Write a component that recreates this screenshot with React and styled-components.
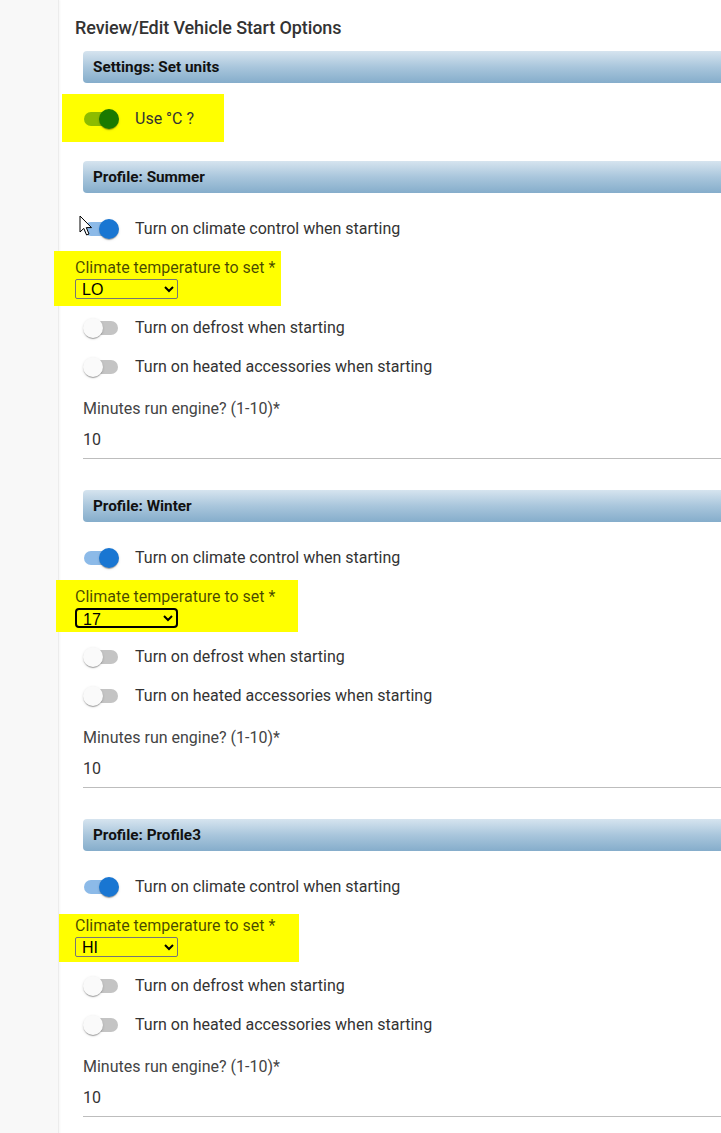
import React from "react"
import styled, { createGlobalStyle } from "styled-components"

const GlobalStyle = createGlobalStyle`
  html, body {
    margin: 0;
    padding: 0;
    background: #fff;
    overflow-x: hidden;
  }
  body {
    font-family: Roboto, "Noto Sans", Arial, sans-serif;
  }
`

const profiles = [
  {
    name: "Summer",
    temp: "LO",
    options: ["LO", "16", "17", "18", "HI"],
    mark: { l: 21, t: 7, b: 7, w: 227 },
    focused: false,
    cursor: true,
  },
  {
    name: "Winter",
    temp: "17",
    options: ["LO", "16", "17", "18", "HI"],
    mark: { l: 19, t: 7, b: 4, w: 242 },
    focused: true,
  },
  {
    name: "Profile3",
    temp: "HI",
    options: ["LO", "16", "17", "18", "HI"],
    mark: { l: 16, t: 2, b: 5, w: 240 },
    focused: false,
  },
]

const Switch = ({ on, color }) => (
  <SwitchRoot>
    <Track $on={on} $color={color} />
    <Thumb $on={on} $color={color} />
  </SwitchRoot>
)

const Cursor = () => (
  <CursorWrap>
    <svg width="14" height="22" viewBox="0 0 14 22">
      <path
        d="M1 1 L1 17 L4.8 13.4 L7.6 20 L10 19 L7.3 12.6 L12.5 12.6 Z"
        fill="#fff"
        stroke="#000"
        strokeWidth="1"
        strokeLinejoin="round"
      />
    </svg>
  </CursorWrap>
)

const App = () => (
  <>
    <GlobalStyle />
    <Page>
      <Sidebar />
      <Main>
        <Title>Review/Edit Vehicle Start Options</Title>

        <Section $after={23}>
          <Header>Settings: Set units</Header>
          <Mark $l={21} $t={5} $b={4} $w={162}>
            <ToggleRow>
              <Switch on color="26,122,0" />
              <ToggleLabel>Use °C ?</ToggleLabel>
            </ToggleRow>
          </Mark>
        </Section>

        {profiles.map(p => (
          <Section key={p.name} $after={31}>
            <Header>Profile: {p.name}</Header>
            <ToggleRow>
              {p.cursor && <Cursor />}
              <Switch on color="25,118,210" />
              <ToggleLabel>Turn on climate control when starting</ToggleLabel>
            </ToggleRow>
            <Mark
              $field
              $l={p.mark.l}
              $t={p.mark.t}
              $b={p.mark.b}
              $w={p.mark.w}
            >
              <Field>
                <FieldLabel>Climate temperature to set *</FieldLabel>
                <Select defaultValue={p.temp} $focused={p.focused}>
                  {p.options.map(o => (
                    <option key={o} value={o}>
                      {o}
                    </option>
                  ))}
                </Select>
              </Field>
            </Mark>
            <ToggleRow>
              <Switch />
              <ToggleLabel>Turn on defrost when starting</ToggleLabel>
            </ToggleRow>
            <ToggleRow>
              <Switch />
              <ToggleLabel>Turn on heated accessories when starting</ToggleLabel>
            </ToggleRow>
            <InputLabel>Minutes run engine? (1-10)*</InputLabel>
            <Input defaultValue="10" />
          </Section>
        ))}
      </Main>
    </Page>
  </>
)

export default App

const Page = styled.div`
  display: flex;
  min-height: 100vh;
  width: 100%;
  overflow: hidden;
`

const Sidebar = styled.aside`
  flex: 0 0 58px;
  background: #f8f8f8;
  border-right: 1px solid #ececec;
  box-shadow: 1px 0 2px rgba(0, 0, 0, 0.04);
`

const Main = styled.main`
  flex: 1;
  min-width: 0;
  display: flex;
  flex-direction: column;
  padding: 16px 0 0 16px;
`

const Title = styled.h2`
  margin: 0;
  font-size: 18px;
  line-height: 24px;
  font-weight: 500;
  color: #333;
  letter-spacing: -0.1px;
`

const Section = styled.section`
  margin: 11px -60px ${p => p.$after - 11}px 8px;
  display: flex;
  flex-direction: column;
`

const Header = styled.div`
  height: 32px;
  display: flex;
  align-items: center;
  padding-left: 10px;
  border-radius: 4px 0 0 4px;
  background: linear-gradient(to bottom, #d6e4ef 0%, #a9c6dc 50%, #85adcb 100%);
  font-size: 15.3px;
  font-weight: 700;
  color: #111;
  margin-bottom: 16px;
`

const Mark = styled.div`
  align-self: flex-start;
  box-sizing: border-box;
  width: ${p => p.$w}px;
  background: #ffff00;
  margin: ${p => -p.$t}px 0 ${p => -p.$b}px ${p => -p.$l - (p.$field ? 8 : 0)}px;
  padding: ${p => p.$t}px 0 ${p => p.$b}px ${p => p.$l}px;
  ${p => p.$field && "margin-top: " + (10 - p.$t) + "px; margin-bottom: " + (9 - p.$b) + "px;"}
`

const ToggleRow = styled.div`
  position: relative;
  display: flex;
  align-items: center;
  height: 39px;
`

const SwitchRoot = styled.span`
  position: relative;
  display: inline-block;
  width: 37px;
  height: 20px;
  flex: 0 0 37px;
  margin-right: 15px;
`

const Track = styled.span`
  position: absolute;
  left: 1px;
  right: 2px;
  top: 3px;
  height: 14px;
  border-radius: 7px;
  background: ${p => (p.$on ? `rgba(${p.$color}, 0.5)` : "#c4c4c4")};
`

const Thumb = styled.span`
  position: absolute;
  top: 0;
  left: ${p => (p.$on ? "16px" : "0")};
  width: 20px;
  height: 20px;
  border-radius: 50%;
  background: ${p => (p.$on ? `rgb(${p.$color})` : "#fafafa")};
  box-shadow: 0 2px 1px -1px rgba(0, 0, 0, 0.2), 0 1px 1px 0 rgba(0, 0, 0, 0.14),
    0 1px 3px 0 rgba(0, 0, 0, 0.12);
`

const ToggleLabel = styled.span`
  font-size: 16px;
  color: #333;
  line-height: 20px;
`

const Field = styled.div`
  display: flex;
  flex-direction: column;
  align-items: flex-start;
`

const FieldLabel = styled.label`
  font-size: 16px;
  line-height: 19px;
  color: rgba(0, 0, 0, 0.72);
  margin-bottom: 2px;
`

const Select = styled.select`
  width: 103px;
  height: 20px;
  box-sizing: border-box;
  background: transparent;
  font-family: "Liberation Sans", Arial, sans-serif;
  font-size: 16px;
  color: #000;
  padding: 0 2px;
  border: ${p => (p.$focused ? "2px solid #000" : "1px solid #767676")};
  border-radius: ${p => (p.$focused ? "4px" : "2px")};
  outline: none;
`

const InputLabel = styled.label`
  margin-top: 13px;
  font-size: 16px;
  line-height: 20px;
  color: #444;
`

const Input = styled.input`
  margin-top: 2px;
  height: 38px;
  box-sizing: border-box;
  border: none;
  border-bottom: 1px solid #bdbdbd;
  padding: 0 0 1px 0;
  font-family: Roboto, "Noto Sans", Arial, sans-serif;
  font-size: 16px;
  color: #333;
  background: transparent;
  outline: none;
`

const CursorWrap = styled.span`
  position: absolute;
  left: -4px;
  top: 6px;
  z-index: 2;
  line-height: 0;
`
